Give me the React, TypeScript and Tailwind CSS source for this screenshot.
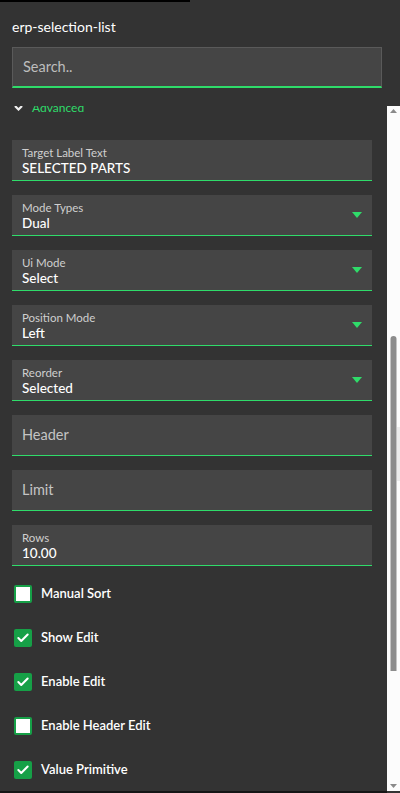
import { Check } from "lucide-react";

const FONT = { fontFamily: "Lato, 'Noto Sans', sans-serif" };

interface FieldProps {
  label: string;
  value?: string;
  select?: boolean;
}

function Field({ label, value, select }: FieldProps) {
  if (value === undefined) {
    return (
      <div className="h-[41px] border-b border-[#2fdc6a] bg-[#454545] px-[10px] pt-[7px]">
        <span className="text-[14.5px] leading-[20px] text-[#c4c4c4]">{label}</span>
      </div>
    );
  }
  return (
    <div className="relative flex h-[41px] flex-col border-b border-[#2fdc6a] bg-[#454545] px-[10px] pt-[6px]">
      <span className="text-[11.5px] leading-[14px] text-[#cfcfcf]">{label}</span>
      <span className="text-[13.5px] leading-[17px] font-medium text-white">{value}</span>
      {select && (
        <svg
          className="absolute right-[10px] top-[17px]"
          width="10"
          height="6"
          viewBox="0 0 10 6"
        >
          <path d="M0 0h10L5 6z" fill="#2fdc6a" />
        </svg>
      )}
    </div>
  );
}

function CheckRow({ label, checked }: { label: string; checked: boolean }) {
  return (
    <div className="flex h-[44px] items-center gap-[9px] pl-[2px]">
      {checked ? (
        <span className="flex h-[18px] w-[18px] items-center justify-center rounded-[2px] bg-[#16a047]">
          <Check size={14} strokeWidth={3.5} color="#fff" />
        </span>
      ) : (
        <span className="h-[18px] w-[18px] rounded-[2px] border-2 border-[#16a047] bg-white" />
      )}
      <span className="text-[13px] font-semibold text-white">{label}</span>
    </div>
  );
}

function Scrollbar() {
  return (
    <div className="relative flex w-[13px] flex-col items-center bg-[#fcfcfc]">
      <svg className="mt-[3px]" width="7" height="4" viewBox="0 0 7 4">
        <path d="M0 4h7L3.5 0z" fill="#8a8a8a" />
      </svg>
      <div className="mt-[223px] h-[335px] w-[6px] -translate-x-[0.5px] rounded-t-[3px] bg-[#8c8c8c]" />
      <div className="flex-1" />
      <svg className="mb-[3px]" width="7" height="4" viewBox="0 0 7 4">
        <path d="M0 0h7L3.5 4z" fill="#8a8a8a" />
      </svg>
      <div className="absolute right-0 top-[321px] h-[54px] w-[3px] bg-[#ececec]" />
    </div>
  );
}

export default function App() {
  return (
    <div className="flex h-[793px] w-[400px] flex-col overflow-hidden bg-[#333333]" style={FONT}>
      <div className="h-[2px] w-[190px] shrink-0 bg-black" />
      <div className="pl-[12px] pr-[18px] pt-[16px]">
        <div className="text-[14px] leading-[18px] text-white">erp-selection-list</div>
        <div className="mt-[11px] flex h-[41px] items-center border border-b-2 border-[#5a5a5a] border-b-[#2fdc6a] bg-[#454545] px-[10px]">
          <span className="text-[14.5px] text-[#bdbdbd]">Search..</span>
        </div>
      </div>

      <div className="mt-[18px] flex min-h-0 flex-1">
        <div className="min-w-0 flex-1 overflow-hidden pl-[12px] pr-[15px]">
          <div className="-mt-[6px] flex h-[16px] items-center gap-[9px] pl-[2px]">
            <svg width="9" height="6" viewBox="0 0 9 6">
              <path d="M1 1l3.5 3.5L8 1" stroke="#f0f0f0" strokeWidth="2.2" fill="none" />
            </svg>
            <span className="text-[12px] leading-[16px] text-[#2fdc6a]">Advanced</span>
          </div>

          <div className="mt-[24px] flex flex-col gap-[14px]">
            <Field label="Target Label Text" value="SELECTED PARTS" />
            <Field label="Mode Types" value="Dual" select />
            <Field label="Ui Mode" value="Select" select />
            <Field label="Position Mode" value="Left" select />
            <Field label="Reorder" value="Selected" select />
            <Field label="Header" />
            <Field label="Limit" />
            <Field label="Rows" value="10.00" />
          </div>

          <div className="mt-[6px] flex flex-col">
            <CheckRow label="Manual Sort" checked={false} />
            <CheckRow label="Show Edit" checked />
            <CheckRow label="Enable Edit" checked />
            <CheckRow label="Enable Header Edit" checked={false} />
            <CheckRow label="Value Primitive" checked />
          </div>
        </div>
        <Scrollbar />
      </div>
      <div className="h-[2px] w-[387px] shrink-0 bg-[#151515]" />
    </div>
  );
}
